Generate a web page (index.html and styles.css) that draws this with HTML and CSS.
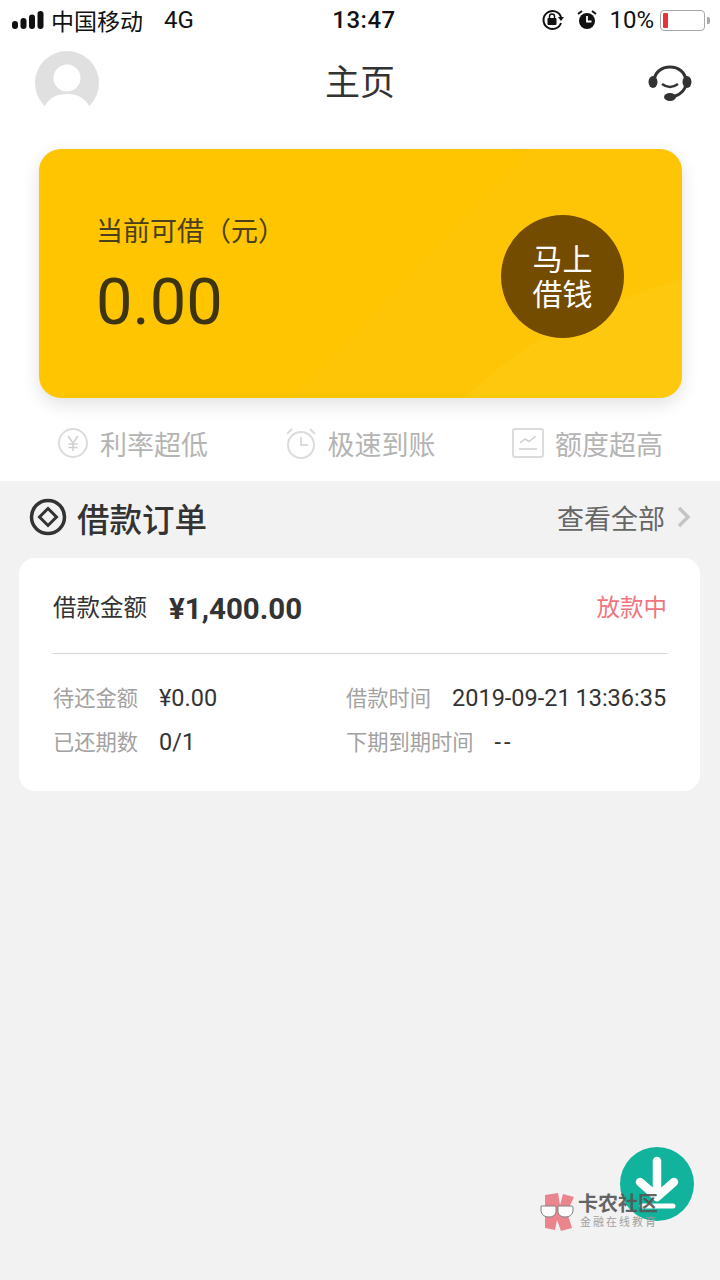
FILE: index.html
```html
<!DOCTYPE html>
<html lang="zh-CN">
<head>
    <meta charset="UTF-8">
    <meta name="viewport" content="width=device-width, initial-scale=1.0">
    <title>主页</title>
    <link rel="stylesheet" href="styles.css">
</head>
<body>
    <div class="top">
        <div class="status">
            <div class="status-left">
                <svg class="signal" width="32" height="20" viewBox="0 0 32 20"><rect x="0" y="11" width="6" height="8" rx="3"/><rect x="8.500" y="8" width="6" height="11" rx="3"/><rect x="17" y="4.500" width="6" height="14.500" rx="3"/><rect x="25.500" y="1" width="6" height="18" rx="3"/></svg>
                <span class="carrier">中国移动</span>
                <span class="network">4G</span>
            </div>
            <div class="clock">13:47</div>
            <div class="status-right">
                <svg width="24" height="22" viewBox="0 0 24 22"><path d="M20 8 A9 9 0 1 0 20 14" fill="none" stroke="#111" stroke-width="2"/><path d="M17 8 L23 8 L20 12Z" fill="#111"/><rect x="6.500" y="9" width="9" height="7" rx="1" fill="#111"/><path d="M8.500 9 V7.500 a2.500 2.500 0 0 1 5 0 V9" fill="none" stroke="#111" stroke-width="1.500"/></svg>
                <svg class="alarm" width="20" height="20" viewBox="0 0 20 20"><circle cx="10" cy="11" r="8" fill="#111"/><path d="M10 6 V11.500 H14.500" fill="none" stroke="#fff" stroke-width="1.800"/><path d="M1 4 L5 1 M19 4 L15 1" stroke="#111" stroke-width="2"/></svg>
                <span class="percent">10%</span>
                <div class="battery"><div class="battery-level"></div></div>
                <div class="battery-tip"></div>
            </div>
        </div>
        <div class="nav">
            <div class="avatar">
                <svg width="64" height="64" viewBox="0 0 64 64"><circle cx="32" cy="32" r="32" fill="#e0e0e0"/><circle cx="32" cy="27" r="13.500" fill="#fff"/><path d="M9 56 C15 46 22 43 32 43 C42 43 49 46 55 56 L55 64 L9 64Z" fill="#fff"/></svg>
            </div>
            <h1 class="title">主页</h1>
            <svg class="service" width="44" height="38" viewBox="0 0 44 38"><path d="M6 18 C6 -2 38 -2 38 18 C38 26 32 31 25 33" fill="none" stroke="#333" stroke-width="3"/><ellipse cx="5" cy="18" rx="4.500" ry="6" fill="#333"/><ellipse cx="39" cy="18" rx="4.500" ry="6" fill="#333"/><ellipse cx="22" cy="33" rx="6" ry="4" fill="#333"/><path d="M14 20 Q22 26 30 20" fill="none" stroke="#333" stroke-width="2.500"/></svg>
        </div>
    </div>

    <div class="hero-wrap">
        <div class="hero">
            <svg class="hero-swoosh" width="643" height="249" viewBox="0 0 643 249"><path d="M425 249 C490 190 540 160 643 130 L643 249Z" fill="#ffcf20" opacity="0.350"/><path d="M250 249 C350 150 430 60 490 0 L643 0 L643 249Z" fill="#ffc91a" opacity="0.250"/></svg>
            <div class="hero-text">
                <div class="hero-label">当前可借（元）</div>
                <div class="hero-amount">0.00</div>
            </div>
            <div class="borrow-btn"><span>马上</span><span>借钱</span></div>
        </div>
    </div>

    <div class="features">
        <div class="feature">
            <svg width="32" height="32" viewBox="0 0 32 32"><circle cx="16" cy="16" r="14" fill="none" stroke="#dcdcdc" stroke-width="2"/><path d="M11 9 L16 16 L21 9 M16 16 V24 M11.500 17 H20.500 M11.500 20.500 H20.500" fill="none" stroke="#cfcfcf" stroke-width="1.500"/></svg>
            <span>利率超低</span>
        </div>
        <div class="feature">
            <svg width="32" height="32" viewBox="0 0 32 32"><circle cx="16" cy="18" r="13" fill="none" stroke="#dcdcdc" stroke-width="2"/><path d="M16 10 V18 H23" fill="none" stroke="#d0d0d0" stroke-width="1.500"/><path d="M2 7 L7 2 M30 7 L25 2" stroke="#dcdcdc" stroke-width="2"/></svg>
            <span>极速到账</span>
        </div>
        <div class="feature">
            <svg width="32" height="30" viewBox="0 0 32 30"><rect x="1" y="1" width="30" height="28" rx="2" fill="none" stroke="#dcdcdc" stroke-width="2"/><path d="M8 15 L13 11 L17 13.500 L24 8" fill="none" stroke="#d0d0d0" stroke-width="1.500"/><path d="M7 21 H25" stroke="#d0d0d0" stroke-width="1.500"/></svg>
            <span>额度超高</span>
        </div>
    </div>

    <div class="orders">
        <div class="orders-head">
            <div class="orders-title">
                <svg width="38" height="38" viewBox="0 0 38 38"><circle cx="19" cy="19" r="16.500" fill="none" stroke="#333" stroke-width="3.500"/><path d="M19 10.500 L27.500 19 L19 27.500 L10.500 19Z" fill="none" stroke="#333" stroke-width="3"/></svg>
                <h2>借款订单</h2>
            </div>
            <div class="orders-all">
                <span>查看全部</span>
                <svg width="16" height="22" viewBox="0 0 16 22"><path d="M3 2 L12 11 L3 20" fill="none" stroke="#c4c4c4" stroke-width="3.500"/></svg>
            </div>
        </div>

        <div class="order-card">
            <div class="order-main">
                <span class="order-label">借款金额</span>
                <span class="order-amount">¥1,400.00</span>
                <span class="order-state">放款中</span>
            </div>
            <div class="order-details">
                <div class="detail-col">
                    <div class="detail"><span class="detail-key">待还金额</span><span class="detail-val">¥0.00</span></div>
                    <div class="detail"><span class="detail-key">已还期数</span><span class="detail-val">0/1</span></div>
                </div>
                <div class="detail-col">
                    <div class="detail"><span class="detail-key">借款时间</span><span class="detail-val detail-time">2019-09-21 13:36:35</span></div>
                    <div class="detail"><span class="detail-key">下期到期时间</span><span class="detail-val detail-empty">--</span></div>
                </div>
            </div>
        </div>
    </div>

    <div class="fab">
        <svg width="74" height="74" viewBox="0 0 74 74"><path d="M37 14 V50 M20 35 L37 50 L54 35" fill="none" stroke="#fff" stroke-width="8.500" stroke-linecap="round" stroke-linejoin="round"/><path d="M22 59 H53" stroke="#fff" stroke-width="5" stroke-linecap="round"/></svg>
    </div>

    <div class="watermark">
        <svg width="34" height="40" viewBox="0 0 34 40"><path d="M5 3 L18 1 L20 13 L23 2 L34 5 L27 20 L32 36 L21 39 L17 28 L15 38 L5 36 Z" fill="#ea7a84"/><path d="M1 14 H15 Q16 14 16 16 V20 Q15 25 9 25 Q2 25 1 19Z M18 14 H32 Q33 14 33 16 V19 Q32 25 25 25 Q19 25 18 20Z" fill="#fff" stroke="#777" stroke-width="1"/></svg>
        <div class="watermark-text">
            <div class="watermark-name">卡农社区</div>
            <div class="watermark-sub">金融在线教育</div>
        </div>
    </div>
</body>
</html>
```

FILE: styles.css
```css
* {
    box-sizing: border-box;
}

html,
body {
    margin: 0;
    padding: 0;
}

body {
    position: relative;
    width: 720px;
    height: 1280px;
    overflow: hidden;
    font-family: "Roboto", "Noto Sans CJK SC", sans-serif;
    background: #f2f2f2;
    color: #333;
}

.top {
    background: #fff;
}

.status {
    display: flex;
    align-items: center;
    justify-content: space-between;
    height: 40px;
    padding: 0 10px 0 12px;
    color: #111;
    position: relative;
}

.status-left {
    display: flex;
    align-items: center;
    font-size: 23px;
    margin-top: -1px;
}

.signal {
    fill: #111;
    margin-right: 7px;
}

.network {
    margin-left: 21px;
    font-size: 24px;
}

.clock {
    position: absolute;
    left: 8px;
    right: 0;
    text-align: center;
    font-size: 24px;
    font-weight: 500;
    letter-spacing: 0.5px;
}

.status-right {
    display: flex;
    align-items: center;
}

.alarm {
    margin-left: 12px;
}

.percent {
    font-size: 24px;
    margin-left: 12px;
    margin-right: 6px;
}

.battery {
    width: 45px;
    height: 21px;
    border: 1.5px solid #a8a8a8;
    border-radius: 4px;
    padding: 2px;
}

.battery-level {
    width: 5px;
    height: 100%;
    background: #e8333a;
    border-radius: 1px;
}

.battery-tip {
    width: 3px;
    height: 7px;
    margin-left: 2px;
    background: #a8a8a8;
    border-radius: 0 2px 2px 0;
}

.nav {
    display: flex;
    align-items: flex-start;
    justify-content: space-between;
    position: relative;
    height: 69px;
    padding: 11px 28px 0 35px;
}

.avatar {
    width: 64px;
    height: 58px;
    overflow: hidden;
}

.title {
    position: absolute;
    left: 0;
    right: 0;
    top: 20px;
    margin: 0;
    text-align: center;
    font-size: 35px;
    line-height: 48px;
    font-weight: normal;
    color: #333;
}

.service {
    margin-top: 13px;
}

.hero-wrap {
    background: #fff;
    padding: 40px 38px 0 39px;
}

.hero {
    position: relative;
    display: flex;
    align-items: center;
    justify-content: space-between;
    height: 249px;
    padding: 0 58px 0 57px;
    overflow: hidden;
    border-radius: 22px;
    background: #fec500;
    box-shadow: 0 6px 18px rgba(0, 0, 0, 0.12);
}

.hero-swoosh {
    position: absolute;
    left: 0;
    top: 0;
}

.hero-text,
.borrow-btn {
    position: relative;
}

.hero-text {
    padding-top: 4px;
}

.hero-label {
    font-size: 27px;
    line-height: 40px;
    color: #4a3f1a;
}

.hero-amount {
    margin-top: 12px;
    font-size: 65px;
    line-height: 76px;
    color: #3d3512;
}

.borrow-btn {
    display: flex;
    flex-direction: column;
    align-items: center;
    justify-content: center;
    width: 123px;
    height: 123px;
    margin-top: 6px;
    border-radius: 50%;
    background: #744c00;
    color: #fff;
    font-size: 30px;
    line-height: 35px;
}

.features {
    display: flex;
    justify-content: space-between;
    height: 83px;
    padding: 7px 57px 0;
    background: #fff;
    align-items: center;
}

.feature {
    display: flex;
    align-items: center;
    gap: 11px;
    font-size: 27px;
    color: #b4b4b4;
}

.orders {
    padding: 0 20px 0 19px;
}

.orders-head {
    display: flex;
    align-items: center;
    justify-content: space-between;
    height: 77px;
    padding: 0 8px 5px 10px;
}

.orders-title {
    display: flex;
    align-items: center;
    gap: 10px;
}

.orders-title h2 {
    margin: 0;
    font-size: 32.500px;
    font-weight: 500;
    color: #333;
}

.orders-all {
    display: flex;
    align-items: center;
    gap: 11px;
    font-size: 27px;
    color: #666;
}

.order-card {
    height: 233px;
    padding: 0 33px 0 34px;
    background: #fff;
    border-radius: 16px;
}

.order-main {
    display: flex;
    align-items: center;
    height: 96px;
    border-bottom: 1px solid #d4d4d4;
}

.order-label {
    font-size: 23.500px;
    color: #333;
}

.order-amount {
    margin-left: 22px;
    margin-top: 6px;
    font-size: 29.500px;
    font-weight: 700;
    color: #333;
}

.order-state {
    margin-left: auto;
    font-size: 23.500px;
    color: #f0757e;
}

.order-details {
    display: flex;
    padding-top: 21px;
}

.detail-col {
    flex: 0 0 293px;
}

.detail-col + .detail-col {
    flex: 1;
}

.detail {
    display: flex;
    align-items: center;
    height: 44px;
    font-size: 23.500px;
}

.detail-key {
    flex: none;
    color: #a2a2a2;
    font-size: 21.250px;
    margin-right: 21px;
    margin-bottom: 2px;
    white-space: nowrap;
}

.detail-val {
    color: #333;
    margin-top: 2px;
    white-space: nowrap;
}

.detail-time {
    word-spacing: -1px;
}

.detail-empty {
    letter-spacing: 3px;
}

.fab {
    position: absolute;
    left: 620px;
    top: 1147px;
    width: 74px;
    height: 74px;
    border-radius: 50%;
    background: #11b39c;
}

.watermark {
    position: absolute;
    left: 540px;
    top: 1192px;
    display: flex;
    gap: 4px;
    opacity: 0.9;
}

.watermark-name {
    font-size: 20px;
    line-height: 24px;
    font-weight: 700;
    color: #555;
    white-space: nowrap;
}

.watermark-sub {
    margin-top: 1px;
    margin-left: 2px;
    font-size: 11px;
    line-height: 12px;
    letter-spacing: 2px;
    color: #999;
    white-space: nowrap;
}
```
